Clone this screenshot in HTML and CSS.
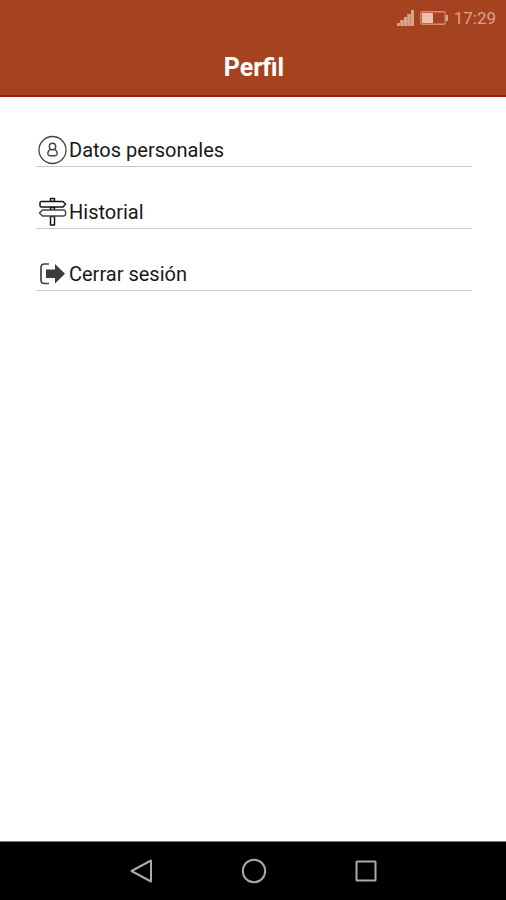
FILE: index.html
```html
<!DOCTYPE html>
<html lang="es">
<head>
<meta charset="utf-8">
<meta name="viewport" content="width=device-width, initial-scale=1">
<title>Perfil</title>
<link rel="stylesheet" href="styles.css">
</head>
<body>
<header class="header">
  <div class="status">
    <svg width="17" height="16" viewBox="0 0 17 16" fill="currentColor" aria-hidden="true">
      <path d="M0 13h3v3H0zM3.500 10h3v6h-3zM7 7h3v9H7zM10.500 4h3v12h-3zM14 0h3v16h-3z"/>
      <path d="M0 13h3v-3h4V7h3V4h4V0h3v16H0z" opacity=".5"/>
    </svg>
    <svg width="28" height="14" viewBox="0 0 28 14" aria-hidden="true">
      <rect x=".75" y=".75" width="24.500" height="12.500" rx="1.500" fill="none" stroke="currentColor" stroke-width="1.300" opacity=".8"/>
      <path d="M2 2h11v10H2z" fill="#f0bfae"/>
      <path d="M26 4h2v6h-2z" fill="currentColor"/>
    </svg>
    <span>17:29</span>
  </div>
  <h1 class="title">Perfil</h1>
</header>
<main class="menu">
  <a class="item" href="#datos">
    <svg class="icon" viewBox="0 0 30 30" aria-hidden="true" fill="none" stroke="#444">
      <circle cx="14.500" cy="15" r="13.500" stroke-width="1.300"/>
      <circle cx="14.500" cy="11.500" r="3.200" stroke-width="1.400"/>
      <path d="M12.500 14.300C9 16 9 20.700 12 20.700h5C20 20.700 20 16 16.500 14.300" stroke-width="1.400"/>
    </svg>
    <span>Datos personales</span>
  </a>
  <a class="item" href="#historial">
    <svg class="icon" viewBox="0 0 30 30" aria-hidden="true" fill="#fff" stroke="#151515" stroke-width="1.500" stroke-linejoin="round">
      <path d="M12.500 1.500h4v3h-4zM12.500 10.500h4v3h-4zM12.500 19.500h4V28h-4z"/>
      <path d="M3 4.500H25l2.500 2.800L25 10H3L2 9V5.500z"/>
      <path d="M4.500 13H26l1.500 1v4L26 19H4.500l-3-3z" stroke="#444"/>
    </svg>
    <span>Historial</span>
  </a>
  <a class="item" href="#salir">
    <svg class="icon" viewBox="0 0 30 30" aria-hidden="true">
      <path d="M11 5H6.500Q3 5 3 8.500V21Q3 24.500 6.500 24.500H11" fill="none" stroke="#444" stroke-width="1.700"/>
      <path d="M8 10.500h9V5L27 14.800 17 24.500V19H8z" fill="#3c3c3c"/>
    </svg>
    <span>Cerrar sesión</span>
  </a>
</main>
<nav class="nav">
  <button class="key" type="button" aria-label="Atrás">
    <svg viewBox="0 0 26 26"><path d="M22 2.500v21L2.500 13z"/></svg>
  </button>
  <button class="key" type="button" aria-label="Inicio">
    <svg viewBox="0 0 26 26"><circle cx="13" cy="13" r="11.200"/></svg>
  </button>
  <button class="key" type="button" aria-label="Recientes">
    <svg viewBox="0 0 26 26"><rect x="3.500" y="3.500" width="19" height="19" rx=".5"/></svg>
  </button>
</nav>
</body>
</html>
```
FILE: styles.css
```css
* {
  box-sizing: border-box;
}

body {
  margin: 0;
  min-height: 100vh;
  display: flex;
  flex-direction: column;
  background: #fff;
  color: #181818;
  font-family: Roboto, "Liberation Sans", sans-serif;
}

.header {
  background: #a54321;
  border-bottom: 2px solid #98200f;
}

.status {
  display: flex;
  align-items: center;
  justify-content: flex-end;
  gap: 6px;
  height: 36px;
  padding: 0 10px;
  color: #dda18b;
  font-size: 17px;
}

.title {
  margin: 0;
  padding-left: 2px;
  height: 59px;
  line-height: 64px;
  text-align: center;
  color: #fff;
  font-size: 25px;
  font-weight: 700;
}

.menu {
  flex: 1;
  display: flex;
  flex-direction: column;
  gap: 28px;
  padding: 36px 34px 36px 36px;
}

.item {
  display: flex;
  align-items: center;
  gap: 1px;
  height: 34px;
  padding-top: 1px;
  padding-left: 2px;
  border-bottom: 1px solid #c8c8c8;
  color: inherit;
  font-size: 20px;
  text-decoration: none;
}

.icon {
  width: 30px;
  height: 30px;
}

.nav {
  display: flex;
  justify-content: center;
  gap: 86px;
  padding: 16px 0 16px 2px;
  background: #000;
  border-top: 1px solid #777;
}

.key {
  width: 26px;
  height: 26px;
  padding: 0;
  border: 0;
  background: none;
}

.key svg {
  display: block;
  fill: none;
  stroke: #aaa;
  stroke-width: 2;
  stroke-linejoin: round;
}
```
